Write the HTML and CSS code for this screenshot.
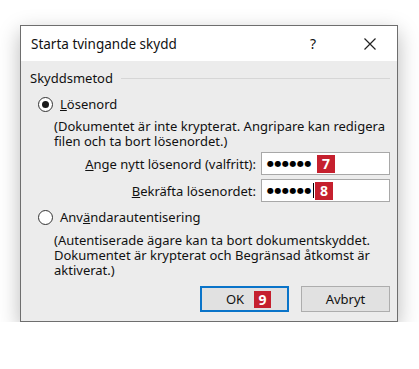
FILE: index.html
```html
<!DOCTYPE html>
<html lang="sv">
<head>
<meta charset="utf-8">
<link rel="stylesheet" href="styles.css">
</head>
<body>
<div class="dialog">
  <div class="titlebar">
    <span class="title">Starta tvingande skydd</span>
    <span class="help">?</span>
    <span class="close">
      <svg width="14" height="14" viewBox="0 0 14 14"><path d="M1.5 1.5 L12.5 12.5 M12.5 1.5 L1.5 12.5" stroke="#222" stroke-width="1.2" fill="none"/></svg>
    </span>
  </div>
  <div class="body">
    <div class="group-head"><span>Skyddsmetod</span><span class="rule"></span></div>
    <div class="radio-row first">
      <span class="radio checked"></span><span><u>L</u>ösenord</span>
    </div>
    <p class="desc first-desc">(Dokumentet är inte krypterat. Angripare kan redigera filen och ta bort lösenordet.)</p>
    <div class="field f1">
      <label><u>A</u>nge nytt lösenord (valfritt):</label>
      <div class="input"><span class="dots">●●●●●●</span><span class="badge">7</span></div>
    </div>
    <div class="field f2">
      <label><u>B</u>ekräfta lösenordet:</label>
      <div class="input"><span class="dots">●●●●●●</span><span class="caret"></span><span class="badge">8</span></div>
    </div>
    <div class="radio-row second">
      <span class="radio"></span><span>Anv<u>ä</u>ndarautentisering</span>
    </div>
    <p class="desc second-desc">(Autentiserade ägare kan ta bort dokumentskyddet. Dokumentet är krypterat och Begränsad åtkomst är aktiverat.)</p>
    <div class="buttons">
      <button class="btn default"><span>OK</span><span class="badge">9</span></button>
      <button class="btn">Avbryt</button>
    </div>
  </div>
</div>
</body>
</html>
```
FILE: styles.css
```css
html, body {
  margin: 0;
  padding: 0;
  background: #ffffff;
}
body {
  font-family: "Noto Sans", "Open Sans", sans-serif;
  font-size: 13px;
  color: #111;
  padding: 25px 0 0 20px;
}
.dialog {
  width: 376px;
  height: 295px;
  border: 1px solid #6e6e6e;
  background: #ececec;
  box-shadow: 0 7px 20px rgba(0,0,0,0.28);
  display: flex;
  flex-direction: column;
}
.titlebar {
  height: 35px;
  background: #ffffff;
  display: flex;
  align-items: center;
  padding-left: 10px;
}
.title {
  flex: 1;
  font-size: 13.5px;
}
.help {
  width: 20px;
  text-align: center;
  font-size: 14px;
  margin-right: 40px;
}
.close {
  width: 14px;
  height: 14px;
  margin-right: 20px;
  display: flex;
}
.body {
  padding: 8px 7px 0 9px;
  display: flex;
  flex-direction: column;
}
.group-head {
  display: flex;
  align-items: center;
  height: 18px;
}
.group-head .rule {
  flex: 1;
  height: 1px;
  background: #d6d6d6;
  margin-left: 8px;
}
.radio-row {
  display: flex;
  align-items: center;
  height: 18px;
  padding-left: 8px;
}
.radio-row.first { margin-top: 8px; }
.radio-row.second { margin-top: 6px; }
.radio {
  width: 13px;
  height: 13px;
  border: 1px solid #333;
  border-radius: 50%;
  background: #fff;
  margin-right: 7px;
  display: flex;
  align-items: center;
  justify-content: center;
}
.radio.checked::after {
  content: "";
  width: 7px;
  height: 7px;
  border-radius: 50%;
  background: #1a1a1a;
}
.desc {
  margin: 0 0 0 24px;
  line-height: 15px;
}
.first-desc { margin-top: 6px; }
.second-desc { margin-top: 7px; }
.field {
  display: flex;
  justify-content: flex-end;
  align-items: center;
}
.f1 { margin-top: 3px; }
.f2 { margin-top: 4px; }
.field label {
  margin-right: 5px;
}
.input {
  width: 129px;
  height: 23px;
  background: #fff;
  border: 1px solid #a8a8a8;
  display: flex;
  align-items: center;
  padding-left: 5px;
  box-sizing: border-box;
}
.dots {
  font-family: "DejaVu Sans", sans-serif;
  font-size: 8px;
  letter-spacing: 0.5px;
  color: #000;
}
.caret {
  width: 1px;
  height: 15px;
  background: #000;
  margin-left: 1px;
}
.badge {
  background: #c5202e;
  color: #fff;
  font-family: "Open Sans", "Noto Sans", sans-serif;
  font-weight: 700;
  font-size: 14px;
  width: 18px;
  height: 18px;
  display: inline-flex;
  align-items: center;
  justify-content: center;
  margin-left: 5px;
}
.caret + .badge { margin-left: 1px; }
.buttons {
  display: flex;
  justify-content: flex-end;
  gap: 12px;
  margin-top: 8px;
}
.btn {
  font-family: inherit;
  font-size: 13px;
  color: #111;
  width: 89px;
  height: 26px;
  background: #e1e1e1;
  border: 1px solid #adadad;
  padding: 0;
  display: flex;
  align-items: center;
  justify-content: center;
}
.btn.default {
  border: 2px solid #0a74c9;
  padding-left: 8px;
}
.btn.default .badge {
  width: 17px;
  height: 17px;
  margin-left: 10px;
}
```
